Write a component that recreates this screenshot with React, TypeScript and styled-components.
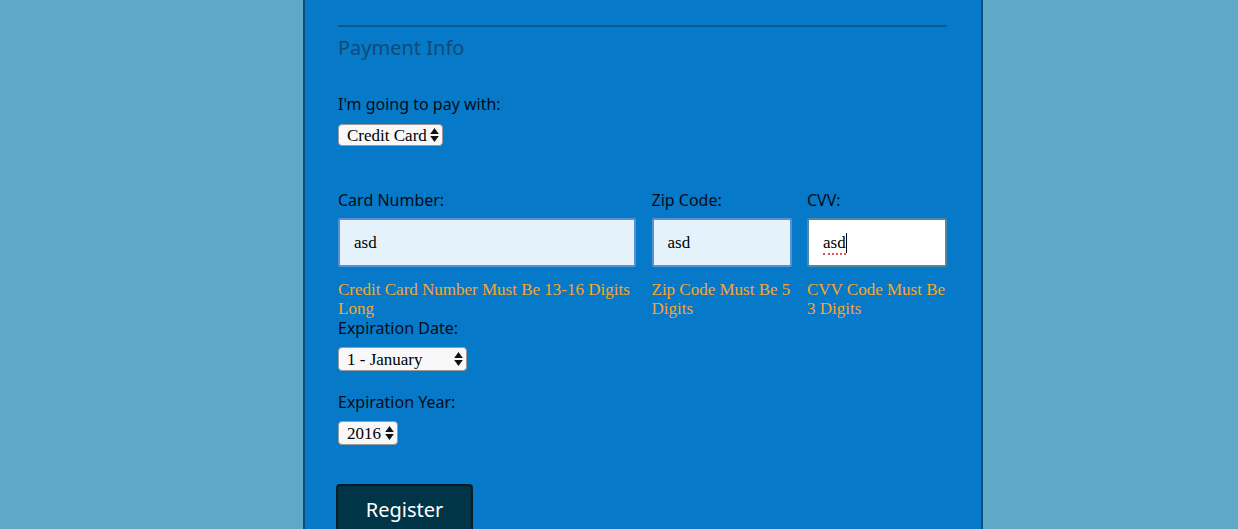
import React from 'react';
import styled, { createGlobalStyle } from 'styled-components';

const GlobalStyle = createGlobalStyle`
    html, body {
        margin: 0;
        padding: 0;
        background: #5fa8c8;
        height: 100%;
        overflow: hidden;
    }
    #root {
        height: 100%;
    }
`

const Page = styled.div`
    display: flex;
    height: 100%;
`

const Panel = styled.form`
    width: 609px;
    margin-left: 303px;
    padding: 0 34px 0 33px;
    background: #0779c9;
    border-left: 2px solid #0b4e7e;
    border-right: 2px solid #0b4e7e;
    font-family: "Noto Sans", "Open Sans", sans-serif;
    color: #050d16;
`

const Divider = styled.hr`
    margin: 25px 0 0;
    border: none;
    height: 2px;
    background: #0b5a8c;
`

const Legend = styled.h2`
    margin: 9px 0 0;
    font-size: 20px;
    line-height: 24px;
    font-weight: 400;
    color: #0f4b76;
`

const Label = styled.label<{ $top?: number }>`
    display: block;
    margin-top: ${props => props.$top ?? 0}px;
    font-size: 16px;
    line-height: 20px;
`

const SelectWrap = styled.div<{ $top?: number; $width: number }>`
    position: relative;
    width: ${props => props.$width}px;
    margin-top: ${props => props.$top ?? 9}px;
`

const Select = styled.select<{ $height: number }>`
    appearance: none;
    -webkit-appearance: none;
    display: block;
    width: 100%;
    height: ${props => props.$height}px;
    margin: 0;
    padding: 0 0 0 8px;
    font-family: "Liberation Serif", "Times New Roman", serif;
    font-size: 17px;
    color: #000;
    background: #f8f8f8;
    border: 1px solid #9a9a9a;
    border-radius: 4px;
    outline: none;
`

const Arrows = styled.svg`
    position: absolute;
    right: 4px;
    top: 50%;
    transform: translateY(-50%);
    pointer-events: none;
`

const Fields = styled.div`
    display: grid;
    grid-template-columns: 298px 140px 140px;
    justify-content: space-between;
    margin-top: 44px;
`

const Field = styled.div``

const InputWrap = styled.div`
    position: relative;
    margin-top: 8px;
`

const Input = styled.input<{ $focused?: boolean }>`
    display: block;
    box-sizing: border-box;
    width: 100%;
    height: 49px;
    margin: 0;
    padding: 1px 0 0 14px;
    font-family: "Liberation Serif", "Times New Roman", serif;
    font-size: 17px;
    color: #000;
    background: ${props => props.$focused ? '#ffffff' : '#e4f3fb'};
    border: 2px solid ${props => props.$focused ? '#4b8aa7' : '#5a8fd4'};
    border-radius: 2px;
    outline: none;
`

const Caret = styled.span`
    position: absolute;
    left: 16px;
    top: 17px;
    height: 18px;
    width: 23px;
    pointer-events: none;
    border-bottom: 2px dotted #e0525a;
    &::after {
        content: '';
        position: absolute;
        right: -1px;
        top: -2px;
        width: 1px;
        height: 20px;
        background: #000;
    }
`

const Error = styled.p`
    margin: 13px 0 0;
    font-family: "Liberation Serif", "Times New Roman", serif;
    font-size: 17px;
    line-height: 19px;
    color: #f6a62c;
`

const Register = styled.button`
    display: block;
    width: 137px;
    height: 50px;
    margin: 39px 0 0 -2px;
    padding: 0;
    background: #003548;
    border: 2px solid #0a1a22;
    border-radius: 4px;
    color: #fff;
    font-family: "Noto Sans", "Open Sans", sans-serif;
    font-size: 20px;
`

const UpDown: React.FC = () => (
    <Arrows width="9" height="15" viewBox="0 0 9 15">
        <path d="M4.5 0.5 L8.8 6.5 L0.2 6.5 Z" fill="#111" />
        <path d="M4.5 14.5 L8.8 8.5 L0.2 8.5 Z" fill="#111" />
    </Arrows>
)

interface IDropdown {
    options: string[];
    width: number;
    height: number;
    top?: number;
}
const Dropdown: React.FC<IDropdown> = ({ options, width, height, top }) => (
    <SelectWrap $width={width} $top={top}>
        <Select $height={height} defaultValue={options[0]}>
            {options.map(o => <option key={o}>{o}</option>)}
        </Select>
        <UpDown />
    </SelectWrap>
)

const months = ['1 - January', '2 - February', '3 - March', '4 - April', '5 - May', '6 - June',
    '7 - July', '8 - August', '9 - September', '10 - October', '11 - November', '12 - December']

const App: React.FC = () => {
    return (
        <>
            <GlobalStyle />
            <Page>
                <Panel onSubmit={e => e.preventDefault()}>
                    <Divider />
                    <Legend>Payment Info</Legend>

                    <Label $top={34}>I'm going to pay with:</Label>
                    <Dropdown options={['Credit Card', 'PayPal', 'Bitcoin']} width={105} height={22} top={10} />

                    <Fields>
                        <Field>
                            <Label>Card Number:</Label>
                            <InputWrap><Input defaultValue="asd" /></InputWrap>
                            <Error>Credit Card Number Must Be 13-16 Digits Long</Error>
                        </Field>
                        <Field>
                            <Label>Zip Code:</Label>
                            <InputWrap><Input defaultValue="asd" /></InputWrap>
                            <Error>Zip Code Must Be 5 Digits</Error>
                        </Field>
                        <Field>
                            <Label>CVV:</Label>
                            <InputWrap>
                                <Input $focused defaultValue="asd" spellCheck={false} />
                                <Caret />
                            </InputWrap>
                            <Error>CVV Code Must Be 3 Digits</Error>
                        </Field>
                    </Fields>

                    <Label>Expiration Date:</Label>
                    <Dropdown options={months} width={129} height={24} />

                    <Label $top={21}>Expiration Year:</Label>
                    <Dropdown options={['2016', '2017', '2018', '2019', '2020']} width={60} height={24} />

                    <Register type="submit">Register</Register>
                </Panel>
            </Page>
        </>
    )
}

export default App
